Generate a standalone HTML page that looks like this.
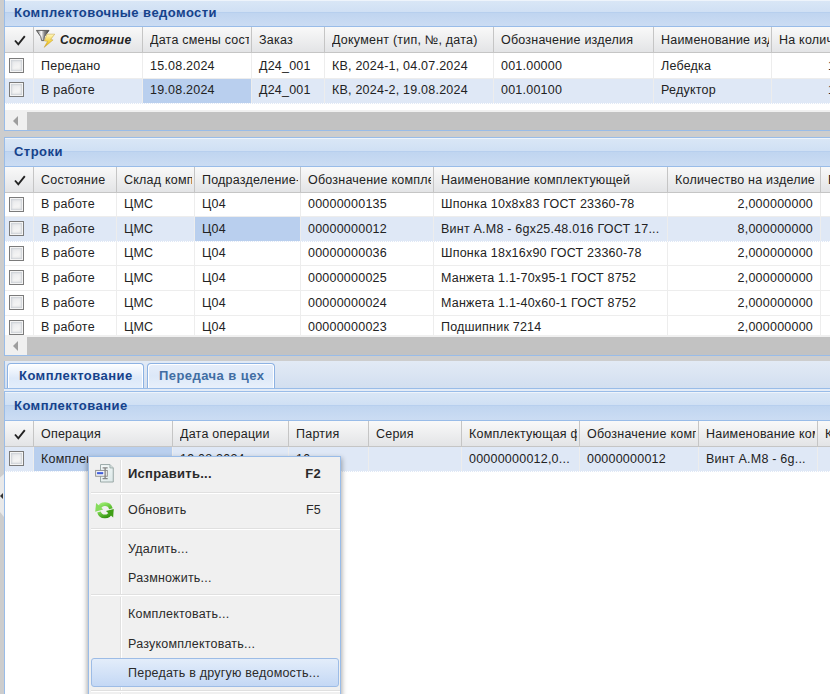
<!DOCTYPE html><html><head><meta charset="utf-8"><style>
*{box-sizing:border-box;margin:0;padding:0}
html,body{width:830px;height:694px;overflow:hidden;background:#cdcdcd;font-family:"Liberation Sans",sans-serif;font-size:12.5px;letter-spacing:0.22px;color:#222}
.abs{position:absolute}
.panel{position:absolute;left:4px;width:830px;border:1px solid #99bce8;border-right:none;background:#fff;overflow:hidden}
.ph{position:absolute;left:0;right:0;top:0;background:linear-gradient(#dae7f6 0%,#d0e0f4 45%,#b7cfee 46%,#b7cfee 50%,#c0d5f0 51%,#cbdcf3 100%);border-bottom:1px solid #99bce8;box-shadow:inset 0 1px 0 rgba(255,255,255,.55)}
.ph span{position:absolute;left:9px;font-weight:bold;color:#15428b;font-size:13px;letter-spacing:0.45px;white-space:nowrap;line-height:16px}
.gh{position:absolute;left:0;right:0;background:linear-gradient(#f9f9f9,#e3e4e6);border-bottom:1px solid #c5c5c5}
.c{position:absolute;top:0;bottom:0;white-space:nowrap;overflow:hidden}
.c span{position:absolute;left:7px;line-height:16px}
.c span.r{left:auto;right:7px}
.gh .c{border-right:1px solid #c5c5c5}
.gh .c span{right:2px;overflow:hidden}
.row{position:absolute;left:0;right:0;border-bottom:1px solid #ededed;background:#fff}
.row.sel{background:#dfe8f6;border-bottom:1px dotted #fff}
.row .c{border-right:1px solid #ededed}
.row .c.fc{background:#b9cfee}
.cb{position:absolute;width:15px;height:15px;border:1px solid #7b7b7b;background:linear-gradient(160deg,#e4e6ea,#f4f4f4 60%,#ececec);box-shadow:inset 0 0 0 1px #f4f4f4,inset 0 0 2px 2px #ccd0d6}
.sb{position:absolute;left:0;right:0;background:#c2c2c2;border-top:2px solid #f0f0f0}
.sb .l{position:absolute;left:0;top:0;bottom:0;width:22px;background:#f0f0f0}
.sb .l:after{content:"";position:absolute;left:8px;top:50%;margin-top:-5px;border-style:solid;border-width:5px 5px 5px 0;border-color:transparent #9e9e9e transparent transparent}
.tab{position:absolute;height:25px;border:1px solid #8db2e3;border-bottom:none;border-radius:4px 4px 0 0;background:linear-gradient(#fdfeff,#dde9f9 60%,#e4eefb);box-shadow:inset 1px 1px 0 #fff,inset -1px 0 0 #fff;font-weight:bold;color:#15428b;font-size:13px;letter-spacing:0.45px;line-height:24px;padding-left:11px;white-space:nowrap}
.tab.ina{background:linear-gradient(#e6eefa,#dce8f8 50%,#e8f0fb);color:#416da3}
.menu{position:absolute;left:88px;top:456px;width:253px;height:250px;background:#f0f0f0;border:1px solid #99bce8;box-shadow:0 3px 5px 1px rgba(0,0,0,.33)}
.vsep{position:absolute;left:31px;width:2px;border-left:1px solid #e0e0e0;border-right:1px solid #fff}
.hsep{position:absolute;left:2px;right:0;height:2px;border-top:1px solid #e0e0e0;background:#fff}
.hover{position:absolute;left:2px;right:1px;height:29px;border:1px solid #9dbce6;border-radius:3px;background:linear-gradient(#e3edfa,#c4d8f5)}
.mi{position:absolute;left:39px;right:19px;height:18px;line-height:18px;font-size:12.5px;color:#2a2a2a;white-space:nowrap}
.mi span{position:absolute;right:0;top:0}
.mi.b{font-weight:bold;font-size:13px;letter-spacing:0.25px}
</style></head><body>
<div class="abs" style="left:0;top:474px;width:4px;height:43px;background:#e9e9e9;clip-path:polygon(0 3.5px,100% 0,100% 100%,0 38px)"></div>
<div class="abs" style="left:0;top:493px;border-style:solid;border-width:3px 3px 3px 0;border-color:transparent #333 transparent transparent"></div>
<div class="panel" style="top:-1px;height:132px">
<div class="ph" style="height:27px"><span style="top:5px">Комплектовочные ведомости</span></div>
<div class="gh" style="top:27px;height:26px"><div class="c" style="left:0px;width:29px"><svg class="abs" style="left:9px;top:8px" width="12" height="11" viewBox="0 0 12 11"><path d="M1 5.5 L4.3 9.3 L10.8 1.2" fill="none" stroke="#222" stroke-width="1.9"/></svg></div><div class="c" style="left:29px;width:109px"><svg class="abs" style="left:0;top:1px" width="26" height="24" viewBox="0 0 752 694"><defs><linearGradient id="fy" x1="0" y1="0" x2="0" y2="1"><stop offset="0" stop-color="#fff8c0"/><stop offset="0.6" stop-color="#f3cf3a"/><stop offset="1" stop-color="#e2a800"/></linearGradient><linearGradient id="fg" x1="0" y1="0" x2="1" y2="0"><stop offset="0" stop-color="#5c5c5c"/><stop offset="0.38" stop-color="#ffffff"/><stop offset="0.62" stop-color="#8a8a8a"/><stop offset="1" stop-color="#3c3c3c"/></linearGradient></defs><path d="M70 70 H435 L300 250 L285 365 L220 365 L195 250 Z" fill="url(#fg)" stroke="#555" stroke-width="26" stroke-linejoin="round"/><path d="M375 178 H600 L482 330 L552 345 L295 560 L392 385 L300 375 Z" fill="url(#fy)" stroke="#c09a30" stroke-width="14" stroke-linejoin="round"/></svg><span style="left:26px;top:5px;font-weight:bold;font-style:italic;font-size:12.1px">Состояние</span></div><div class="c" style="left:138px;width:109px"><span style="top:5px">Дата смены состояния</span></div><div class="c" style="left:247px;width:73px"><span style="top:5px">Заказ</span></div><div class="c" style="left:320px;width:169px"><span style="top:5px">Документ (тип, №, дата)</span></div><div class="c" style="left:489px;width:160px"><span style="top:5px">Обозначение изделия</span></div><div class="c" style="left:649px;width:118px"><span style="top:5px">Наименование изделия</span></div><div class="c" style="left:767px;width:100px"><span style="top:5px">На количество</span></div></div>
<div class="row" style="top:53px;height:26px"><div class="c" style="left:0px;width:29px"><span class="cb" style="left:4px;top:5px"></span></div><div class="c" style="left:29px;width:109px"><span style="top:5px">Передано</span></div><div class="c" style="left:138px;width:109px"><span style="top:5px">15.08.2024</span></div><div class="c" style="left:247px;width:73px"><span style="top:5px">Д24_001</span></div><div class="c" style="left:320px;width:169px"><span style="top:5px">КВ, 2024-1, 04.07.2024</span></div><div class="c" style="left:489px;width:160px"><span style="top:5px">001.00000</span></div><div class="c" style="left:649px;width:118px"><span style="top:5px">Лебедка</span></div><div class="c" style="left:767px;width:100px"><span style="left:56px;top:5px">1</span></div></div>
<div class="row sel" style="top:79px;height:25px"><div class="c" style="left:0px;width:29px"><span class="cb" style="left:4px;top:3px"></span></div><div class="c" style="left:29px;width:109px"><span style="top:3px">В работе</span></div><div class="c fc" style="left:138px;width:109px"><span style="top:3px">19.08.2024</span></div><div class="c" style="left:247px;width:73px"><span style="top:3px">Д24_001</span></div><div class="c" style="left:320px;width:169px"><span style="top:3px">КВ, 2024-2, 19.08.2024</span></div><div class="c" style="left:489px;width:160px"><span style="top:3px">001.00100</span></div><div class="c" style="left:649px;width:118px"><span style="top:3px">Редуктор</span></div><div class="c" style="left:767px;width:100px"><span style="left:56px;top:3px">1</span></div></div>
<div class="sb" style="top:110px;height:20px"><div class="l"></div></div>
</div>
<div class="panel" style="top:137px;height:219px">
<div class="ph" style="height:29px"><span style="top:6px">Строки</span></div>
<div class="gh" style="top:29px;height:26px"><div class="c" style="left:0px;width:29px"><svg class="abs" style="left:9px;top:8px" width="12" height="11" viewBox="0 0 12 11"><path d="M1 5.5 L4.3 9.3 L10.8 1.2" fill="none" stroke="#222" stroke-width="1.9"/></svg></div><div class="c" style="left:29px;width:83px"><span style="top:5px">Состояние</span></div><div class="c" style="left:112px;width:78px"><span style="top:5px">Склад комплектующей</span></div><div class="c" style="left:190px;width:106px"><span style="top:5px">Подразделение-получатель</span></div><div class="c" style="left:296px;width:133px"><span style="top:5px">Обозначение комплектующей</span></div><div class="c" style="left:429px;width:234px"><span style="top:5px">Наименование комплектующей</span></div><div class="c" style="left:663px;width:153px"><span style="top:5px">Количество на изделие</span></div><div class="c" style="left:816px;width:100px"><span style="top:5px">Ед. изм.</span></div></div>
<div class="row" style="top:55px;height:24px"><div class="c" style="left:0px;width:29px"><span class="cb" style="left:4px;top:4px"></span></div><div class="c" style="left:29px;width:83px"><span style="top:3px">В работе</span></div><div class="c" style="left:112px;width:78px"><span style="top:3px">ЦМС</span></div><div class="c" style="left:190px;width:106px"><span style="top:3px">Ц04</span></div><div class="c" style="left:296px;width:133px"><span style="top:3px">00000000135</span></div><div class="c" style="left:429px;width:234px"><span style="top:3px">Шпонка 10x8x83 ГОСТ 23360-78</span></div><div class="c" style="left:663px;width:153px"><span class="r" style="top:3px">2,000000000</span></div><div class="c" style="left:816px;width:100px"></div></div>
<div class="row sel" style="top:79px;height:25px"><div class="c" style="left:0px;width:29px"><span class="cb" style="left:4px;top:4px"></span></div><div class="c" style="left:29px;width:83px"><span style="top:4px">В работе</span></div><div class="c" style="left:112px;width:78px"><span style="top:4px">ЦМС</span></div><div class="c fc" style="left:190px;width:106px"><span style="top:4px">Ц04</span></div><div class="c" style="left:296px;width:133px"><span style="top:4px">00000000012</span></div><div class="c" style="left:429px;width:234px"><span style="top:4px">Винт А.М8 - 6gx25.48.016 ГОСТ 17...</span></div><div class="c" style="left:663px;width:153px"><span class="r" style="top:4px">8,000000000</span></div><div class="c" style="left:816px;width:100px"></div></div>
<div class="row" style="top:104px;height:24px"><div class="c" style="left:0px;width:29px"><span class="cb" style="left:4px;top:4px"></span></div><div class="c" style="left:29px;width:83px"><span style="top:3px">В работе</span></div><div class="c" style="left:112px;width:78px"><span style="top:3px">ЦМС</span></div><div class="c" style="left:190px;width:106px"><span style="top:3px">Ц04</span></div><div class="c" style="left:296px;width:133px"><span style="top:3px">00000000036</span></div><div class="c" style="left:429px;width:234px"><span style="top:3px">Шпонка 18x16x90 ГОСТ 23360-78</span></div><div class="c" style="left:663px;width:153px"><span class="r" style="top:3px">2,000000000</span></div><div class="c" style="left:816px;width:100px"></div></div>
<div class="row" style="top:128px;height:25px"><div class="c" style="left:0px;width:29px"><span class="cb" style="left:4px;top:4px"></span></div><div class="c" style="left:29px;width:83px"><span style="top:4px">В работе</span></div><div class="c" style="left:112px;width:78px"><span style="top:4px">ЦМС</span></div><div class="c" style="left:190px;width:106px"><span style="top:4px">Ц04</span></div><div class="c" style="left:296px;width:133px"><span style="top:4px">00000000025</span></div><div class="c" style="left:429px;width:234px"><span style="top:4px">Манжета 1.1-70x95-1 ГОСТ 8752</span></div><div class="c" style="left:663px;width:153px"><span class="r" style="top:4px">2,000000000</span></div><div class="c" style="left:816px;width:100px"></div></div>
<div class="row" style="top:153px;height:25px"><div class="c" style="left:0px;width:29px"><span class="cb" style="left:4px;top:4px"></span></div><div class="c" style="left:29px;width:83px"><span style="top:4px">В работе</span></div><div class="c" style="left:112px;width:78px"><span style="top:4px">ЦМС</span></div><div class="c" style="left:190px;width:106px"><span style="top:4px">Ц04</span></div><div class="c" style="left:296px;width:133px"><span style="top:4px">00000000024</span></div><div class="c" style="left:429px;width:234px"><span style="top:4px">Манжета 1.1-40x60-1 ГОСТ 8752</span></div><div class="c" style="left:663px;width:153px"><span class="r" style="top:4px">2,000000000</span></div><div class="c" style="left:816px;width:100px"></div></div>
<div class="row" style="top:178px;height:25px"><div class="c" style="left:0px;width:29px"><span class="cb" style="left:4px;top:4px"></span></div><div class="c" style="left:29px;width:83px"><span style="top:3px">В работе</span></div><div class="c" style="left:112px;width:78px"><span style="top:3px">ЦМС</span></div><div class="c" style="left:190px;width:106px"><span style="top:3px">Ц04</span></div><div class="c" style="left:296px;width:133px"><span style="top:3px">00000000023</span></div><div class="c" style="left:429px;width:234px"><span style="top:3px">Подшипник 7214</span></div><div class="c" style="left:663px;width:153px"><span class="r" style="top:3px">2,000000000</span></div><div class="c" style="left:816px;width:100px"></div></div>
<div class="sb" style="top:197px;height:20px"><div class="l"></div></div>
</div>
<div class="abs" style="left:4px;top:361px;width:830px;height:31px;background:linear-gradient(#e2eaf5,#d0ddef);border-left:1px solid #99bce8"></div>
<div class="tab" style="left:7px;top:363px;width:137px">Комплектование</div>
<div class="tab ina" style="left:147px;top:363px;width:128px">Передача в цех</div>
<div class="abs" style="left:4px;top:388px;width:830px;height:4px;background:#e4ecf7;border-top:1px solid #99bce8;border-bottom:1px solid #99bce8"></div>
<div class="panel" style="top:391px;height:310px">
<div class="ph" style="height:29px"><span style="top:6px">Комплектование</span></div>
<div class="gh" style="top:29px;height:26px"><div class="c" style="left:0px;width:29px"><svg class="abs" style="left:9px;top:8px" width="12" height="11" viewBox="0 0 12 11"><path d="M1 5.5 L4.3 9.3 L10.8 1.2" fill="none" stroke="#222" stroke-width="1.9"/></svg></div><div class="c" style="left:29px;width:139px"><span style="top:5px">Операция</span></div><div class="c" style="left:168px;width:116px"><span style="top:5px">Дата операции</span></div><div class="c" style="left:284px;width:80px"><span style="top:5px">Партия</span></div><div class="c" style="left:364px;width:93px"><span style="top:5px">Серия</span></div><div class="c" style="left:457px;width:118px"><span style="top:5px">Комплектующая факт</span></div><div class="c" style="left:575px;width:119px"><span style="top:5px">Обозначение комплектующей</span></div><div class="c" style="left:694px;width:119px"><span style="top:5px">Наименование комплектующей</span></div><div class="c" style="left:813px;width:100px"><span style="top:5px">Количество</span></div></div>
<div class="row sel" style="top:55px;height:25px"><div class="c" style="left:0px;width:29px"><span class="cb" style="left:4px;top:4px"></span></div><div class="c fc" style="left:29px;width:139px"><span style="top:4px">Комплектование</span></div><div class="c" style="left:168px;width:116px"><span style="top:4px">19.08.2024</span></div><div class="c" style="left:284px;width:80px"><span style="top:4px">10</span></div><div class="c" style="left:364px;width:93px"></div><div class="c" style="left:457px;width:118px"><span style="top:4px">00000000012,0...</span></div><div class="c" style="left:575px;width:119px"><span style="top:4px">00000000012</span></div><div class="c" style="left:694px;width:119px"><span style="top:4px">Винт А.М8 - 6g...</span></div><div class="c" style="left:813px;width:100px"></div></div>
</div>
<div class="menu">
<div class="vsep" style="top:3px;height:32px"></div>
<div class="vsep" style="top:38px;height:33px"></div>
<div class="vsep" style="top:74px;height:63px"></div>
<div class="vsep" style="top:140px;height:93px"></div>
<div class="vsep" style="top:236px;height:20px"></div>
<div class="hsep" style="top:35px"></div>
<div class="hsep" style="top:71px"></div>
<div class="hsep" style="top:137px"></div>
<div class="hsep" style="top:233px"></div>
<div class="hover" style="top:201px"></div>
<svg class="abs" style="left:3px;top:3px" width="26" height="26" viewBox="0 0 694 694">
<defs><linearGradient id="pg" x1="0" y1="0" x2="1" y2="1"><stop offset="0" stop-color="#f8fcfc"/><stop offset="1" stop-color="#dbe7e7"/></linearGradient>
<linearGradient id="bl" x1="0" y1="0" x2="0" y2="1"><stop offset="0" stop-color="#7d93ee"/><stop offset="0.5" stop-color="#2b48d0"/><stop offset="1" stop-color="#6f86e6"/></linearGradient></defs>
<path d="M228 122 H478 L568 212 V588 H228 Z" fill="url(#pg)" stroke="#97a7a5" stroke-width="26"/>
<path d="M478 122 V212 H568" fill="#d4dede" stroke="#97a7a5" stroke-width="22"/>
<rect x="98" y="278" width="310" height="155" fill="#fbfbfb" stroke="#8d8d8d" stroke-width="26"/>
<rect x="135" y="318" width="165" height="65" fill="url(#bl)"/>
<path d="M282 212 H418 M350 212 V498 M282 498 H418" stroke="#858585" stroke-width="36" fill="none"/>
</svg>
<svg class="abs" style="left:3px;top:40px" width="26" height="26" viewBox="0 0 694 694">
<defs><linearGradient id="gr1" x1="0" y1="0" x2="1" y2="1"><stop offset="0" stop-color="#9aec70"/><stop offset="1" stop-color="#52b626"/></linearGradient>
<linearGradient id="gr2" x1="0" y1="0" x2="1" y2="1"><stop offset="0" stop-color="#7cd650"/><stop offset="1" stop-color="#2f8e0c"/></linearGradient></defs>
<path d="M190 299 A165 165 0 0 1 504 312" fill="none" stroke="url(#gr1)" stroke-width="100"/>
<path d="M110 160 L85 392 L300 335 Z" fill="#86dc5c"/>
<path d="M500 411 A165 165 0 0 1 186 398" fill="none" stroke="url(#gr2)" stroke-width="100"/>
<path d="M580 318 L565 548 L372 372 Z" fill="#3f9f16"/>
</svg>
<div class="mi b" style="top:8px">Исправить...<span>F2</span></div>
<div class="mi" style="top:44px">Обновить<span>F5</span></div>
<div class="mi" style="top:83px">Удалить...</div>
<div class="mi" style="top:112px">Размножить...</div>
<div class="mi" style="top:148px">Комплектовать...</div>
<div class="mi" style="top:178px">Разукомплектовать...</div>
<div class="mi" style="top:207px">Передать в другую ведомость...</div>
</div>
</body></html>
